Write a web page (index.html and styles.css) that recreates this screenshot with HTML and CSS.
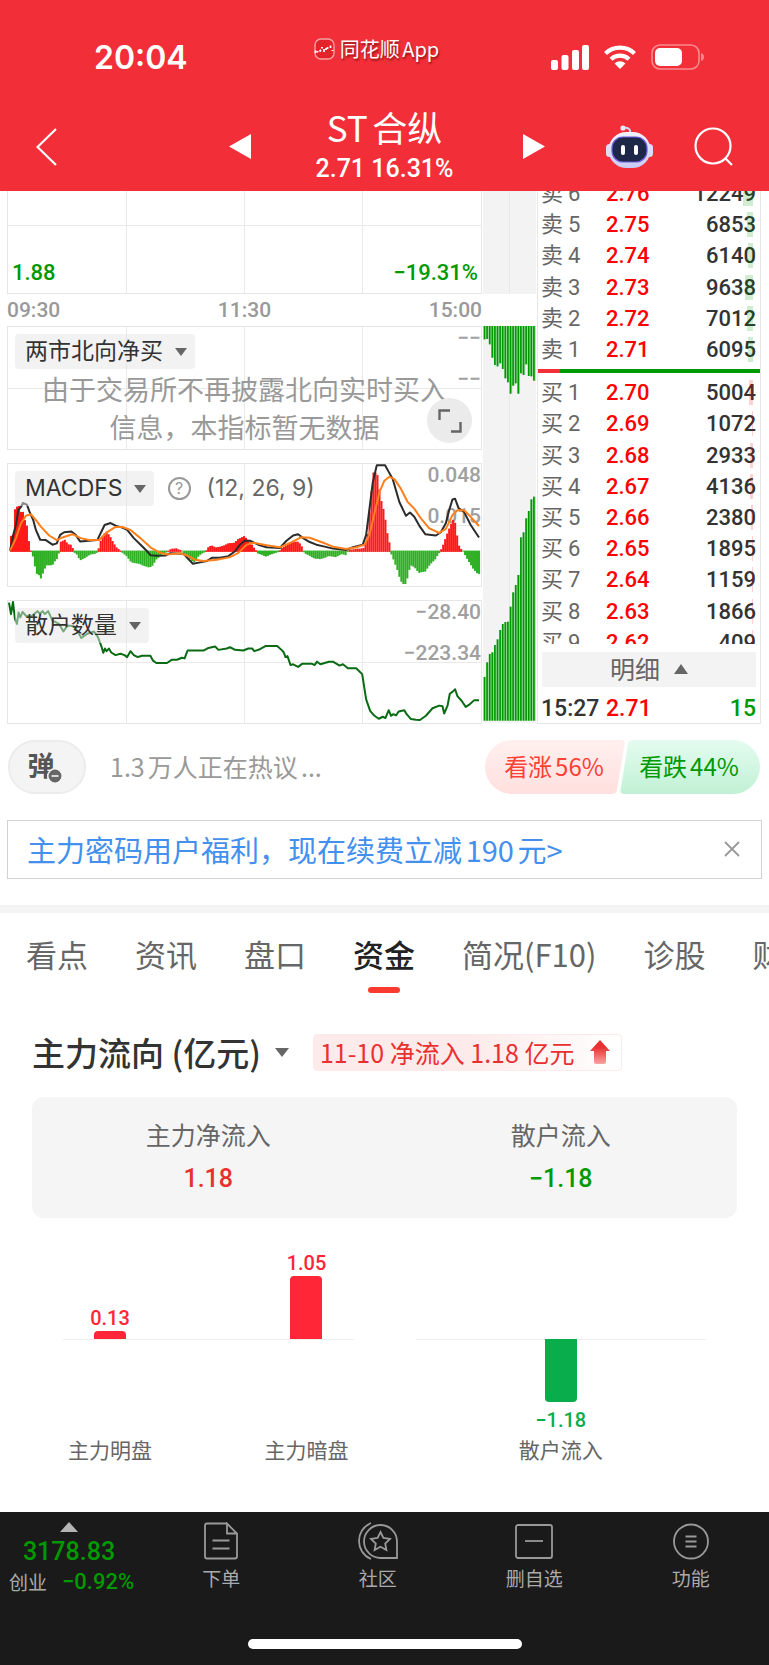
FILE: index.html
```html
<!DOCTYPE html>
<html lang="zh-CN">
<head>
<meta charset="utf-8">
<meta name="viewport" content="width=device-width, initial-scale=1">
<title>ST合纵</title>
<link rel="stylesheet" href="styles.css">
</head>
<body>
<header class="header">
  <div class="status">
    <time class="clock">20:04</time>
    <div class="app-label">
      <svg width="21" height="22" viewBox="0 0 21 22"><rect x="1" y="1" width="19" height="20" rx="6" fill="#e3222a" stroke="#f9a0a3" stroke-width="1.4"/><path d="M1.500 12.500v2.500M3.500 13v1.500M5.500 13.500l1.500-1.500M8 10.500V9M10 11v3M12 12V10M13.500 11V9M16.500 10V7.500M18.500 12v1" fill="none" stroke="#fff" stroke-width="1.800"/></svg>
      <span>同花顺App</span>
    </div>
    <div class="signals">
      <svg width="38" height="25" viewBox="0 0 38 25" fill="#fff"><rect x="0" y="15" width="7" height="10" rx="2"/><rect x="10.500" y="10" width="7" height="15" rx="2"/><rect x="21" y="5" width="7" height="20" rx="2"/><rect x="31" y="0" width="7" height="25" rx="2"/></svg>
      <svg width="32" height="24" viewBox="0 0 32 24" fill="none" stroke="#fff" stroke-width="4.200"><path d="M1.500 8.500a21 21 0 0 1 29 0"/><path d="M7 14.300a13 13 0 0 1 18 0"/><path d="M16 24l-5.500-5.600a8 8 0 0 1 11 0z" fill="#fff" stroke="none"/></svg>
      <svg width="53" height="26" viewBox="0 0 53 26"><rect x="1" y="1" width="47" height="24" rx="8" fill="none" stroke="#f98a8e" stroke-width="1.600"/><rect x="4" y="4" width="27" height="18" rx="5" fill="#fff"/><path d="M50 9q3 1 3 4t-3 4z" fill="#f98a8e"/></svg>
    </div>
  </div>
  <div class="titlebar">
    <div class="side side-left">
      <button class="icon-btn" aria-label="返回"><svg width="21" height="38" viewBox="0 0 21 38"><path d="M20 1L1.500 19 20 37" fill="none" stroke="#fff" stroke-width="2.200"/></svg></button>
      <button class="icon-btn" aria-label="上一只"><svg width="22" height="25" viewBox="0 0 22 25"><path d="M22 0v25L0 12.500z" fill="#fff"/></svg></button>
    </div>
    <div class="stock">
      <h1 class="stock-name">ST合纵</h1>
      <p class="stock-price">2.71 16.31%</p>
    </div>
    <div class="side side-right">
      <button class="icon-btn push" aria-label="下一只"><svg width="22" height="25" viewBox="0 0 22 25"><path d="M0 0v25l22-12.500z" fill="#fff"/></svg></button>
      <button class="icon-btn" aria-label="智能助手"><svg width="47" height="44" viewBox="0 0 47 44"><defs><linearGradient id="shell" x1="0" y1="0" x2="0" y2="1"><stop offset="0" stop-color="#f3f2ff"/><stop offset="1" stop-color="#c9cbf4"/></linearGradient></defs><path d="M17 3q8-1 7 5" fill="none" stroke="#d5d6f5" stroke-width="2"/><circle cx="17" cy="3" r="2.600" fill="#e8e8fd"/><rect x="0" y="19" width="7" height="13" rx="3.500" fill="#dcdcf8"/><rect x="40" y="19" width="7" height="13" rx="3.500" fill="#dcdcf8"/><rect x="2.500" y="7" width="42" height="36" rx="18" fill="url(#shell)"/><rect x="6" y="12" width="35" height="25" rx="11" fill="#1d2748" stroke="#6b5bd8" stroke-width="1.200"/><rect x="15" y="20" width="4" height="10" rx="2" fill="#fff"/><rect x="28" y="20" width="4" height="10" rx="2" fill="#fff"/></svg></button>
      <button class="icon-btn" aria-label="搜索"><svg width="39" height="39" viewBox="0 0 39 39" fill="none" stroke="#fff" stroke-width="2.200"><circle cx="19" cy="19" r="17.500"/><path d="M31 31l7 7"/></svg></button>
    </div>
  </div>
</header>

<main class="main">
  <section class="market">
    <div class="charts">
      <div class="panel panel-price"><span class="down">1.88</span><span class="down">−19.31%</span></div>
      <div class="axis"><span>09:30</span><span>11:30</span><span>15:00</span></div>
      <div class="panel">
        <div class="scale"><span>−−</span><span>−−</span></div>
        <button class="pill">两市北向净买<i class="caret"></i></button>
        <p class="notice">由于交易所不再披露北向实时买入<br>信息，本指标暂无数据</p>
        <button class="expand" aria-label="全屏"><svg width="24" height="24" viewBox="0 0 24 24" fill="none" stroke="#666" stroke-width="2.400"><path d="M1.500 11V1.500H12M22.500 13v9.500H13"/></svg></button>
      </div>
      <div class="panel">
        <div class="scale"><span>0.048</span><span>0.015</span></div>
        <svg class="plot" viewBox="21 24 1425 372" preserveAspectRatio="none">
          <g id="macd-bars"></g>
          <polyline class="line line-dif" points="27,288 38,235 45,210 52,165 60,155 66,143 78,148 86,170 97,195 105,225 118,255 135,256 155,270 168,266 178,240 190,232 212,230 225,240 238,260 265,258 290,256 300,235 312,210 330,204 345,212 365,218 380,225 400,250 425,275 440,290 450,302 470,304 495,303 510,296 530,297 550,298 563,312 578,328 600,324 620,320 635,310 660,310 685,305 705,290 720,270 735,257 750,258 775,270 800,278 840,280 860,258 880,242 895,238 910,250 930,262 950,270 975,276 1000,282 1040,286 1060,278 1090,270 1100,240 1110,160 1120,80 1132,28 1157,28 1168,48 1180,70 1200,140 1220,182 1232,172 1245,185 1262,215 1278,238 1310,242 1325,232 1340,205 1350,165 1360,132 1368,130 1378,158 1395,170 1415,210 1440,248"/>
          <polyline class="line line-dea" points="27,288 45,250 60,205 75,182 90,177 105,195 120,215 145,242 168,256 185,248 215,238 240,250 265,256 295,256 320,232 345,216 365,216 390,225 420,250 450,278 475,293 500,300 540,296 560,303 585,316 610,320 650,316 690,308 715,295 740,270 760,264 800,272 840,278 870,265 905,247 930,249 965,262 1000,276 1040,283 1070,278 1095,270 1110,240 1125,175 1140,110 1155,75 1170,63 1185,70 1205,100 1225,140 1245,160 1265,190 1290,220 1320,234 1340,222 1360,180 1375,165 1395,165 1415,185 1440,213"/>
        </svg>
        <div class="pill-row">
          <button class="pill">MACDFS<i class="caret"></i></button>
          <button class="help" aria-label="说明">?</button>
          <span class="params">(12, 26, 9)</span>
        </div>
      </div>
      <div class="panel">
        <div class="scale"><span>−28.40</span><span>−223.34</span></div>
        <svg class="plot" viewBox="21 435 1425 372" preserveAspectRatio="none">
          <polyline class="line line-retail" points="24,440 30,475 36,438 42,490 48,505 53,470 58,485 65,468 75,480 90,482 110,466 117,474 125,466 132,475 142,466 155,495 175,505 188,528 200,510 220,512 232,530 242,548 260,535 280,528 292,545 303,575 308,593 313,580 318,588 325,580 332,592 345,600 360,596 372,600 380,606 390,588 400,600 412,606 425,602 450,602 458,617 468,624 500,624 515,614 530,614 545,608 553,610 562,586 610,586 625,578 645,574 655,584 680,580 690,576 705,584 730,586 745,580 757,580 763,588 780,582 798,572 832,572 845,584 852,592 857,606 863,603 872,630 880,628 895,636 908,626 935,626 945,630 952,620 962,628 975,624 988,620 1000,620 1020,632 1030,628 1045,640 1070,640 1088,658 1093,690 1100,735 1112,770 1125,785 1138,794 1150,788 1158,792 1168,768 1175,785 1182,780 1190,784 1198,772 1215,768 1222,780 1235,795 1250,797 1262,798 1280,785 1300,762 1320,754 1330,756 1335,778 1345,755 1352,718 1360,712 1368,704 1375,725 1388,740 1400,758 1412,750 1425,738 1440,738"/>
        </svg>
        <button class="pill">散户数量<i class="caret"></i></button>
      </div>
    </div>

    <div class="depth">
      <div class="depth-top"></div>
      <svg class="depth-bars" viewBox="0 0 159 1191" preserveAspectRatio="none"><g id="depth-bars"></g></svg>
    </div>

    <div class="book">
      <table class="quotes sell">
        <tbody>
          <tr><th>卖<b>6</b></th><td class="px">2.76</td><td class="qty"><i style="width:10px"></i>12249</td></tr>
          <tr><th>卖<b>5</b></th><td class="px">2.75</td><td class="qty"><i style="width:6px"></i>6853</td></tr>
          <tr><th>卖<b>4</b></th><td class="px">2.74</td><td class="qty"><i style="width:5px"></i>6140</td></tr>
          <tr><th>卖<b>3</b></th><td class="px">2.73</td><td class="qty"><i style="width:8px"></i>9638</td></tr>
          <tr><th>卖<b>2</b></th><td class="px">2.72</td><td class="qty"><i style="width:6px"></i>7012</td></tr>
          <tr><th>卖<b>1</b></th><td class="px">2.71</td><td class="qty"><i style="width:5px"></i>6095</td></tr>
        </tbody>
      </table>
      <div class="ratio"></div>
      <table class="quotes buy">
        <tbody>
          <tr><th>买<b>1</b></th><td class="px">2.70</td><td class="qty"><i style="width:4px"></i>5004</td></tr>
          <tr><th>买<b>2</b></th><td class="px">2.69</td><td class="qty"><i style="width:1px"></i>1072</td></tr>
          <tr><th>买<b>3</b></th><td class="px">2.68</td><td class="qty"><i style="width:3px"></i>2933</td></tr>
          <tr><th>买<b>4</b></th><td class="px">2.67</td><td class="qty"><i style="width:3px"></i>4136</td></tr>
          <tr><th>买<b>5</b></th><td class="px">2.66</td><td class="qty"><i style="width:2px"></i>2380</td></tr>
          <tr><th>买<b>6</b></th><td class="px">2.65</td><td class="qty"><i style="width:1px"></i>1895</td></tr>
          <tr><th>买<b>7</b></th><td class="px">2.64</td><td class="qty"><i style="width:1px"></i>1159</td></tr>
          <tr><th>买<b>8</b></th><td class="px">2.63</td><td class="qty"><i style="width:1px"></i>1866</td></tr>
          <tr><th>买<b>9</b></th><td class="px">2.62</td><td class="qty"><i style="width:1px"></i>409</td></tr>
        </tbody>
      </table>
      <button class="detail">明细<i class="caret caret-up"></i></button>
      <div class="tick"><time>15:27</time><span class="px">2.71</span><span class="tick-qty">15</span></div>
    </div>
  </section>

  <section class="sentiment">
    <button class="danmu">弹<svg class="danmu-badge" width="16" height="16" viewBox="0 0 16 16"><circle cx="8" cy="8" r="7.200" fill="#666" stroke="#f4f4f4" stroke-width="1.500"/><path d="M4.500 8h7" stroke="#fff" stroke-width="1.500"/></svg></button>
    <a class="talk" href="#">1.3万人正在热议...</a>
    <div class="votes">
      <button class="vote vote-up"><svg class="vote-bg" viewBox="0 0 140 54" preserveAspectRatio="none"><defs><linearGradient id="up" x1="0" y1="0" x2="0" y2="1"><stop offset="0" stop-color="#fff0ef"/><stop offset="1" stop-color="#ffe0de"/></linearGradient></defs><path d="M27 0H136q4 0 3.500 4L132 50q-.6 4-5 4H27A27 27 0 0 1 27 0z" fill="url(#up)"/></svg><span>看涨56%</span></button>
      <button class="vote vote-down"><svg class="vote-bg" viewBox="0 0 140 54" preserveAspectRatio="none"><defs><linearGradient id="down" x1="0" y1="0" x2="0" y2="1"><stop offset="0" stop-color="#e4fcf0"/><stop offset="1" stop-color="#c1f1d5"/></linearGradient></defs><path d="M113 54H4q-4 0-3.500-4L8 4q.6-4 5-4H113A27 27 0 0 1 113 54z" fill="url(#down)"/></svg><span>看跌44%</span></button>
    </div>
  </section>

  <aside class="promo">
    <a href="#">主力密码用户福利，现在续费立减190元&gt;</a>
    <button class="icon-btn" aria-label="关闭"><svg width="16" height="16" viewBox="0 0 16 16"><path d="M1 1l14 14M15 1L1 15" stroke="#999" stroke-width="1.800"/></svg></button>
  </aside>

  <nav class="tabs">
    <a href="#">看点</a><a href="#">资讯</a><a href="#">盘口</a><a href="#" class="active">资金</a><a href="#">简况(F10)</a><a href="#">诊股</a><a href="#">财务</a>
  </nav>

  <section class="flow">
    <div class="flow-head">
      <h2><button class="flow-title"><span>主力流向 (亿元)</span><i class="caret"></i></button></h2>
      <p class="flow-tag">11-10 净流入 1.18 亿元<svg width="20" height="24" viewBox="0 0 20 24"><defs><linearGradient id="arrow" x1="0" y1="0" x2="0" y2="1"><stop offset=".3" stop-color="#e93030"/><stop offset="1" stop-color="#f9a3a3"/></linearGradient></defs><path d="M10 0l10 11h-4v11q0 2-2 2H6q-2 0-2-2V11H0z" fill="url(#arrow)"/></svg></p>
    </div>
    <dl class="summary">
      <div><dt>主力净流入</dt><dd class="rise">1.18</dd></div>
      <div><dt>散户流入</dt><dd class="down">−1.18</dd></div>
    </dl>
    <div class="bars">
      <div class="group">
        <div class="col"><div class="above"><span>0.13</span><i style="height:8px"></i></div><div class="below"></div><div class="name">主力明盘</div></div>
        <div class="col"><div class="above"><span>1.05</span><i style="height:63px"></i></div><div class="below"></div><div class="name">主力暗盘</div></div>
      </div>
      <div class="group group-one">
        <div class="col"><div class="above"></div><div class="below"><i style="height:63px"></i><span>−1.18</span></div><div class="name">散户流入</div></div>
      </div>
    </div>
  </section>
</main>

<footer class="footer">
  <div class="dock">
    <button class="index">
      <i class="caret caret-up"></i>
      <span class="index-value">3178.83</span>
      <span class="index-row"><span>创业</span><span class="index-pct">−0.92%</span></span>
    </button>
    <button class="dock-item"><svg width="36" height="38" viewBox="0 0 36 38"><path d="M24 1.500H4q-2 0-2 2v31q0 2 2 2h28q2 0 2-2V11.500L24 1.500v10h10M9.500 18.500h17M9.500 26.500h17"/></svg>下单</button>
    <button class="dock-item"><svg width="40" height="38" viewBox="0 0 40 38"><path d="M13 1C-3 8-3 30 13 37M39 36H23a16.500 16.500 0 1 1 16-16.500z"/><path d="M22.500 10l2.900 6 6.600.9-4.800 4.600 1.200 6.500-5.900-3.200-5.900 3.200 1.200-6.500-4.800-4.600 6.600-.9z"/></svg>社区</button>
    <button class="dock-item"><svg width="38" height="38" viewBox="0 0 38 38"><rect x="1" y="3" width="36" height="33" rx="2"/><path d="M10 19h18"/></svg>删自选</button>
    <button class="dock-item"><svg width="36" height="38" viewBox="0 0 36 38"><circle cx="18" cy="19.500" r="17"/><path d="M12.500 14.500h11M12.500 19.500h11M12.500 24.500h11"/></svg>功能</button>
  </div>
  <div class="home"></div>
</footer>
<script src="charts.js"></script>
</body>
</html>
```
FILE: styles.css
```css
* { box-sizing: border-box; }
body {
  margin: 0;
  background: #fff;
  color: #333;
  font-family: "Noto Sans CJK SC", sans-serif;
  text-autospace: normal;
  overflow-x: hidden;
}
h1, h2, p, dl, dd { margin: 0; }
button { border: 0; padding: 0; background: none; font: inherit; color: inherit; }
a { color: inherit; text-decoration: none; }
svg { display: block; flex: none; }
i, b { font-style: normal; font-weight: inherit; }
.icon-btn { display: flex; }
.down { color: #090; }
.rise { color: #e93030; }
.caret {
  display: inline-block;
  border: 6px solid transparent;
  border-top: 8px solid #666;
  border-bottom: 0;
}
.caret-up { border-top: 0; border-bottom: 10px solid #666; }

/* header */
.header { height: 191px; background: #f22f38; color: #fff; }
.status {
  height: 108px;
  padding: 0 65px 0 94px;
  display: grid;
  grid-template-columns: 1fr auto 1fr;
  align-items: center;
}
.clock { font: 600 32px/40px Inter, sans-serif; padding-top: 8px; }
.app-label {
  display: flex;
  align-items: center;
  gap: 5px;
  padding: 0 45px 10px 0;
  font-size: 20px;
  line-height: 24px;
  text-shadow: 1px 2px 2px rgba(80, 0, 0, .6);
}
.signals { display: flex; justify-content: flex-end; align-items: center; gap: 15px; padding-top: 6px; }
.titlebar {
  display: grid;
  grid-template-columns: 1fr auto 1fr;
  align-items: start;
  padding: 0 36px;
}
.side { display: flex; align-items: center; height: 77px; }
.side-left { justify-content: space-between; padding-right: 65px; }
.side-right { gap: 41px; padding-left: 70px; }
.push { margin-right: auto; }
.stock { text-align: center; }
.stock-name { font-size: 35px; line-height: 38px; font-weight: 400; }
.stock-price { font: 500 25px/46px Roboto, sans-serif; }

/* market */
.market {
  display: grid;
  grid-template-columns: 475fr 53fr 224fr;
  gap: 1px;
  padding: 0 8px 0 7px;
  font-family: Roboto, "Noto Sans CJK SC", sans-serif;
}
.charts { display: grid; grid-template-rows: 103px 32px 124px 13px 124px 13px 124px; min-width: 0; }
.charts > :nth-child(4) { grid-row: 5; }
.charts > :nth-child(5) { grid-row: 7; }
.panel {
  position: relative;
  display: grid;
  border: 1px solid #e6e6e6;
  background:
    linear-gradient(#e9e9e9, #e9e9e9) 25% 0 / 1px 100% no-repeat,
    linear-gradient(#e9e9e9, #e9e9e9) 50% 0 / 1px 100% no-repeat,
    linear-gradient(#e9e9e9, #e9e9e9) 75% 0 / 1px 100% no-repeat,
    linear-gradient(#e9e9e9, #e9e9e9) 0 50% / 100% 1px no-repeat;
}
.panel > * { grid-area: 1 / 1; }
.panel-price {
  border-top: 0;
  display: flex;
  justify-content: space-between;
  align-items: flex-end;
  padding: 0 3px 7px 4px;
  font-size: 22px;
  line-height: 26px;
  font-weight: 500;
  background-position: 25% 0, 50% 0, 75% 0, 0 34px;
}
.axis { display: flex; justify-content: space-between; align-items: center; font-size: 21px; color: #999; line-height: 26px; font-weight: 500; }
.scale {
  display: flex;
  flex-direction: column;
  gap: 15px;
  align-items: flex-end;
  font-size: 21px;
  line-height: 26px;
  font-weight: 500;
  color: #a0a0a0;
  margin-top: -2px;
}
.plot { width: 100%; height: 100%; min-width: 0; position: relative; }
.line { fill: none; stroke-width: 2; stroke-linejoin: round; vector-effect: non-scaling-stroke; }
.line-dif { stroke: #2b2b2b; }
.line-dea { stroke: #ff7f1a; }
.line-retail { stroke: #0a6b14; }
.pill {
  position: relative;
  justify-self: start;
  align-self: start;
  margin: 7px 0 0 7px;
  height: 35px;
  padding: 0 8px 0 10px;
  display: flex;
  align-items: center;
  gap: 12px;
  border-radius: 4px;
  background: rgba(229, 229, 229, .5);
  color: #333;
  font: 23px/35px Inter, "Noto Sans CJK SC", sans-serif;
}
.pill-row { position: relative; display: flex; align-items: flex-start; }
.pill-row .pill { gap: 11px; }
.help {
  width: 23px;
  height: 23px;
  margin: 13px 16px 0 14px;
  border: 2px solid #999;
  border-radius: 50%;
  color: #999;
  font: 16px/19px Inter, sans-serif;
}
.params { font: 23px/26px Inter, sans-serif; color: #666; margin-top: 11px; }
.notice { text-align: center; font-size: 27px; line-height: 38px; color: #999; padding-top: 45px; }
.expand {
  position: absolute;
  right: 9px;
  bottom: 6px;
  width: 45px;
  height: 45px;
  display: grid;
  place-items: center;
  border-radius: 50%;
  background: #ebebeb;
}
.depth { display: flex; flex-direction: column; }
.depth-top { height: 103px; margin-bottom: 32px; }
.depth-bars { width: 100%; height: 397px; }
.depth-top, .depth-bars {
  background: linear-gradient(#e9e9e9, #e9e9e9) 50% 0 / 1px 100% no-repeat #f3f3f3;
}

/* order book */
.book { border: solid #e6e6e6; border-width: 0 1px 1px 1px; height: 533px; display: flex; flex-direction: column; }
.quotes { display: block; border-spacing: 0; overflow: hidden; font-size: 22px; line-height: 31px; }
.sell { height: 174px; display: flex; flex-direction: column; justify-content: flex-end; }
.quotes tbody { display: grid; grid-auto-rows: 1fr; flex: none; }
.sell tbody { height: 187px; }
.buy { height: 267px; margin-top: 4px; }
.buy tbody { height: 281px; }
.quotes tr, .tick { display: grid; grid-template-columns: 65px 1fr auto; padding: 0 4px 0 3px; align-items: center; }
.quotes th { padding: 0; display: flex; gap: 5px; font-weight: 400; color: #666; }
.px { color: #f00; font-weight: 500; padding: 0; }
.qty { position: relative; padding: 0; font-weight: 500; }
.qty i { position: absolute; right: 3px; top: 3px; height: 25px; background: #f00; opacity: .18; }
.sell .qty i { background: #090; }
.ratio { height: 4px; margin-top: 4px; background: linear-gradient(90deg, #f22f38 10%, #090 10%); }
.detail {
  margin: 8px 4px 0;
  height: 35px;
  background: #f3f3f3;
  color: #666;
  font: 25px/33px "Noto Sans CJK SC", sans-serif;
  padding-bottom: 2px;
  display: flex;
  justify-content: center;
  align-items: center;
  gap: 14px;
}
.detail .caret { border-width: 0 7px 10px; }
.tick { flex: 1; font-size: 23px; font-weight: 500; padding-top: 6px; }
.tick-qty { color: #090; }

/* sentiment */
.sentiment { display: flex; align-items: center; padding: 16px 9px 0 8px; height: 70px; }
.danmu {
  position: relative;
  width: 78px;
  height: 54px;
  padding: 0 12px 4px 0;
  border: 2px solid #ececec;
  border-radius: 27px;
  background: #f4f4f4;
  color: #555;
  font-size: 27px;
  font-weight: 700;
  line-height: 30px;
}
.danmu-badge { position: absolute; left: 37px; top: 26px; }
.talk { margin-left: 24px; font-size: 25px; line-height: 30px; padding-bottom: 2px; color: #999; }
.votes { display: flex; margin-left: auto; }
.vote { position: relative; width: 140px; height: 54px; padding: 0 2px 2px 0; font-size: 24px; line-height: 30px; }
.vote-bg { position: absolute; inset: 0; width: 100%; height: 100%; }
.vote span { position: relative; }
.vote-up { color: #ff4034; }
.vote-down { color: #090; margin-left: -5px; }

/* promo */
.promo {
  margin: 26px 7px;
  height: 59px;
  padding: 0 21px 2px 19px;
  border: 1px solid #d2d2d2;
  display: flex;
  justify-content: space-between;
  align-items: center;
  font-size: 29px;
  line-height: 36px;
  color: #4390ee;
}

/* tabs */
.tabs {
  border-top: 8px solid #f4f4f4;
  display: flex;
  gap: 47px;
  padding: 18px 0 0 26px;
  height: 92px;
  overflow: hidden;
  white-space: nowrap;
  font-size: 31px;
  line-height: 46px;
  color: #666;
}
.tabs a { flex: none; display: flex; flex-direction: column; align-items: center; }
.tabs .active { color: #222; font-weight: 500; }
.tabs .active::after { content: ""; width: 32px; height: 6px; margin-top: 10px; border-radius: 3px; background: #fc3a30; }

/* capital flow */
.flow { padding: 36px 32px 0; }
.flow-head { display: flex; align-items: center; gap: 24px; }
.flow-title { display: flex; align-items: center; gap: 14px; font-size: 33px; line-height: 38px; font-weight: 500; }
.flow-title .caret { border-width: 9px 7px 0; }
.flow-tag {
  display: flex;
  align-items: center;
  gap: 16px;
  padding: 0 11px 0 6px;
  border: 1px solid #fdeaea;
  border-radius: 4px;
  background: linear-gradient(90deg, #fdeaea 50%, #fff);
  color: #e93030;
  font-size: 25px;
  line-height: 35px;
}
.summary {
  margin: 26px 0 0;
  height: 121px;
  padding-top: 20px;
  border-radius: 12px;
  background: #f5f5f5;
  display: grid;
  grid-template-columns: 1fr 1fr;
  text-align: center;
}
.summary dt { font-size: 25px; line-height: 34px; color: #666; }
.summary dd { font: 500 25px/56px Roboto, sans-serif; }
.bars { display: grid; grid-template-columns: 1fr 1fr; padding-top: 24px; }
.group {
  margin: 0 31px;
  display: flex;
  justify-content: space-between;
  background: linear-gradient(#eee, #eee) 0 97px / 100% 1px no-repeat;
}
.group-one { justify-content: center; }
.col { width: 94px; display: flex; flex-direction: column; align-items: center; }
.above, .below { display: flex; flex-direction: column; align-items: center; font: 500 20px/24px Roboto, sans-serif; }
.above { height: 97px; justify-content: flex-end; gap: 1px; color: #ff2637; }
.below { height: 95px; color: #0aad4b; gap: 6px; }
.above i { width: 32px; background: #ff2637; border-radius: 4px 4px 0 0; }
.below i { width: 32px; background: #0aad4b; border-radius: 0 0 4px 4px; }
.name { font-size: 21px; line-height: 30px; color: #666; }

/* bottom dock */
.footer { margin-top: 48px; height: 153px; background: #1a1a1a; color: #aaa; display: flex; flex-direction: column; justify-content: space-between; align-items: center; padding-bottom: 16px; }
.dock { width: 100%; display: grid; grid-template-columns: 143px repeat(4, 1fr); }
.index { display: flex; flex-direction: column; align-items: center; padding: 10px 0 0; }
.index .caret-up { border-width: 0 9px 10px; border-bottom-color: #b5b5b5; margin-right: 6px; }
.index-value { font: 500 25px/30px Roboto, sans-serif; color: #090; margin: 5px 5px 0 0; }
.index-row { display: flex; align-items: center; gap: 15px; font-size: 19px; line-height: 30px; }
.index-pct { font: 500 22px/30px Roboto, sans-serif; color: #090; }
.dock-item { display: flex; flex-direction: column; align-items: center; gap: 5px; padding-top: 10px; font-size: 19px; line-height: 26px; }
.dock-item svg { fill: none; stroke: #999; stroke-width: 1.8; }
.home { width: 274px; height: 10px; border-radius: 5px; background: #fff; }
```
FILE: charts.js
```js
const NS = "http://www.w3.org/2000/svg";

function bar(group, x, y, width, height, fill) {
  const r = document.createElementNS(NS, "rect");
  r.setAttribute("x", x);
  r.setAttribute("y", y);
  r.setAttribute("width", width);
  r.setAttribute("height", height);
  r.setAttribute("fill", fill);
  group.appendChild(r);
}

const zero = 290;
const macd = [
  [27,245],[37,240],[38,165],[50,150],[55,172],[66,172],[70,205],[78,220],[80,255],[86,289],
  [90,292],[97,325],[103,358],[110,360],[116,376],[122,360],[128,345],[135,333],[152,333],[158,322],[168,310],[172,292],
  [174,264],[190,256],[198,270],[210,272],[215,289],[216,293],[225,300],[235,318],[250,310],[265,300],[280,298],[290,291],
  [292,275],[296,262],[305,240],[315,232],[325,245],[335,265],[345,280],[355,289],
  [360,292],[375,305],[390,325],[410,328],[430,335],[445,340],[455,332],[465,315],[480,302],[500,291],
  [508,285],[524,283],[540,289],[548,295],[565,312],[578,325],[588,310],[600,298],[614,291],
  [618,282],[630,274],[645,280],[665,276],[680,268],[700,266],[710,255],[730,246],[745,262],[755,275],[765,289],
  [768,296],[780,300],[795,306],[810,300],[835,292],[840,284],[855,275],[870,265],[890,262],[900,270],[908,289],
  [910,296],[920,300],[940,312],[960,314],[985,305],[1005,308],[1025,298],[1038,303],[1042,288],[1090,282],
  [1100,250],[1106,185],[1112,120],[1118,52],[1130,52],[1136,98],[1142,135],[1152,175],[1160,232],[1168,270],[1170,289],
  [1173,300],[1180,318],[1192,350],[1200,378],[1207,390],[1217,390],[1224,360],[1230,333],[1242,338],[1255,356],[1275,352],[1290,330],[1305,315],[1320,291],
  [1325,282],[1330,270],[1340,240],[1350,215],[1358,195],[1365,205],[1372,250],[1378,280],[1388,289],
  [1390,293],[1405,320],[1420,345],[1432,358],[1440,360]
];
const macdGroup = document.getElementById("macd-bars");
for (let x = 27, k = 0; x < 1440; x += 6) {
  while (k < macd.length - 2 && macd[k + 1][0] < x) k++;
  const [x0, y0] = macd[k], [x1, y1] = macd[k + 1];
  const y = Math.round(y0 + (y1 - y0) * (x - x0) / (x1 - x0));
  if (y <= zero) bar(macdGroup, x, y - 2, 6.2, zero - y + 4, "#ff1a1a");
  else bar(macdGroup, x, zero - 2, 6.2, y - zero + 2, "#2eb023");
}

const depthGroup = document.getElementById("depth-bars");
const hanging = [40,39,55,95,117,121,112,129,157,169,203,179,172,203,142,147,115,150,151,164];
const rising = [131,175,200,205,227,244,272,290,296,297,342,385,407,437,550,565,607,629,664,672];
hanging.forEach((h, i) => {
  bar(depthGroup, 2 + i * 7.8, 0, 7.8, h, "#a6dca6");
  bar(depthGroup, 2 + i * 7.8, 0, 5, h, "#009800");
});
rising.forEach((h, i) => {
  bar(depthGroup, 2 + i * 7.8, 1184 - h, 7.8, h, "#a6dca6");
  bar(depthGroup, 2 + i * 7.8, 1184 - h, 5, h, "#009800");
});
```
